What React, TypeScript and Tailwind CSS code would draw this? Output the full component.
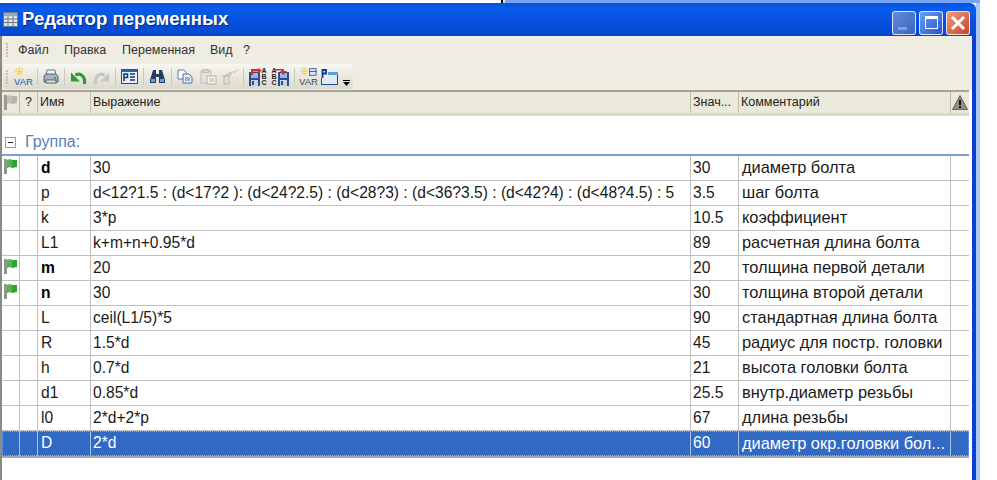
const ROWS = [
  { name: "d", expr: "30", val: "30", note: "диаметр болта", flag: true },
  { name: "p", expr: "d<12?1.5 : (d<17?2 ): (d<24?2.5) : (d<28?3) : (d<36?3.5) : (d<42?4) : (d<48?4.5) : 5", val: "3.5", note: "шаг болта" },
  { name: "k", expr: "3*p", val: "10.5", note: "коэффициент" },
  { name: "L1", expr: "k+m+n+0.95*d", val: "89", note: "расчетная длина болта" },
  { name: "m", expr: "20", val: "20", note: "толщина первой детали", flag: true },
  { name: "n", expr: "30", val: "30", note: "толщина второй детали", flag: true },
  { name: "L", expr: "ceil(L1/5)*5", val: "90", note: "стандартная длина болта" },
  { name: "R", expr: "1.5*d", val: "45", note: "радиус для постр. головки" },
  { name: "h", expr: "0.7*d", val: "21", note: "высота головки болта" },
  { name: "d1", expr: "0.85*d", val: "25.5", note: "внутр.диаметр резьбы" },
  { name: "l0", expr: "2*d+2*p", val: "67", note: "длина резьбы" },
  { name: "D", expr: "2*d", val: "60", note: "диаметр окр.головки бол...", selected: true },
];

const GRID = "grid grid-cols-[18px_18px_53px_600px_48px_212px_18px]";

function Flag({ color = "#2fa52f", pole = "#8a9a8a" }: { color?: string; pole?: string }) {
  return (
    <svg width="13" height="15" viewBox="0 0 13 15">
      <rect x="0" y="0" width="3" height="15" fill={pole} />
      <path d="M3 1L6 0L8 1L13 1L13 8L8 9L6 8L3 9Z" fill={color} />
      <path d="M3 1L6 0L8 1V8L6 8L3 9Z" fill="#fff" fillOpacity="0.18" />
    </svg>
  );
}

function VarIcon({ grid }: { grid?: boolean }) {
  return (
    <div className="flex flex-col items-center leading-none w-[17px]">
      <div className={`flex items-center gap-px h-[10px] w-full ${grid ? "justify-center" : "justify-start"}`}>
        <svg width="9" height="9" viewBox="0 0 9 9">
          <path d="M4.5 0V9M0 4.5H9M1.2 1.2L7.8 7.8M7.8 1.2L1.2 7.8" stroke="#f0cc50" strokeWidth="1.3" strokeDasharray="2 1" />
        </svg>
        {grid && (
          <svg width="8" height="8" viewBox="0 0 8 8">
            <rect x="0.5" y="0.5" width="7" height="7" fill="#dfe8f4" stroke="#3a5f90" />
            <path d="M0 3.5H8" stroke="#3a5f90" />
          </svg>
        )}
      </div>
      <span className={`text-[9.5px] leading-[10px] ${grid ? "text-[#3a4658]" : "text-[#1f55b5]"}`}>VAR</span>
    </div>
  );
}

function Sep() {
  return <div className="w-px h-[17px] mx-[5px] bg-[#c9c8bd]" />;
}

function Printer() {
  return (
    <svg width="16" height="16" viewBox="0 0 16 16">
      <path d="M4 1H12L13 6H3Z" fill="#eef1f5" stroke="#6a7585" />
      <path d="M1 7L3 5H13L15 7V13H1Z" fill="#a9b3c0" stroke="#55606e" />
      <rect x="3" y="11" width="10" height="3" fill="#dfe3e8" stroke="#55606e" />
      <rect x="11" y="8" width="2" height="2" fill="#32b040" />
    </svg>
  );
}

function Arrow({ color, flip }: { color: string; flip?: boolean }) {
  return (
    <svg width="17" height="16" viewBox="0 0 17 16" className={flip ? "-scale-x-100" : ""}>
      <path d="M14.5 15C15.5 8 11 3.5 5.5 6" fill="none" stroke={color} strokeWidth="3.2" />
      <path d="M1 3.5L1 12.5L10 12.5Z" fill={color} />
    </svg>
  );
}

function PeIcon() {
  return (
    <svg width="17" height="15" viewBox="0 0 17 15">
      <rect x="0.5" y="0.5" width="16" height="14" fill="#eaf0f8" stroke="#1f4a8c" />
      <rect x="0.5" y="0.5" width="16" height="2.5" fill="#2a62b0" />
      <path d="M3 12V5H6.5V8.5H3" fill="none" stroke="#16397a" strokeWidth="1.6" />
      <path d="M9 5H14M9 8H14M9 11H14" stroke="#16397a" strokeWidth="1.4" />
    </svg>
  );
}

function Binoculars() {
  return (
    <svg width="17" height="15" viewBox="0 0 17 15">
      <path d="M4 1H7V5H10V1H13L16 11V14H10V8H7V14H1V11Z" fill="#223e66" />
      <rect x="2" y="10" width="4" height="3" fill="#6f9bd0" />
      <rect x="11" y="10" width="4" height="3" fill="#6f9bd0" />
    </svg>
  );
}

function Copy() {
  return (
    <svg width="16" height="15" viewBox="0 0 16 15">
      <path d="M1 1H7L9 3V10H1Z" fill="#fff" stroke="#5a7ea8" />
      <path d="M6 5H12L15 8V14H6Z" fill="#eef3fa" stroke="#4a6f9e" />
      <path d="M8 9H13M8 11H13" stroke="#4a6f9e" />
    </svg>
  );
}

function Paste() {
  return (
    <svg width="17" height="16" viewBox="0 0 17 16">
      <rect x="1" y="2" width="10" height="12" fill="#e6e4da" stroke="#c0beb4" />
      <rect x="3" y="0.5" width="6" height="3" fill="#d8d6cc" stroke="#c0beb4" />
      <rect x="7" y="7" width="9" height="8" fill="#f4f3ec" stroke="#b4b2a8" />
      <path d="M9 10H14M9 12H14" stroke="#b4b2a8" />
    </svg>
  );
}

function Spray() {
  return (
    <svg width="17" height="16" viewBox="0 0 17 16">
      <path d="M4 7L10 3V5L8 8V15H3V8Z" fill="#e2e0d6" stroke="#b8b6ac" />
      <path d="M0.5 7H8" stroke="#b8b6ac" />
      <circle cx="13" cy="3" r="1" fill="#b8b6ac" />
      <circle cx="16" cy="1.5" r="1" fill="#c8c6bc" />
    </svg>
  );
}

function SaveAbc({ reverse }: { reverse?: boolean }) {
  const floppy = (
    <svg width="11" height="14" viewBox="0 0 11 14">
      <rect width="11" height="14" fill="#2b4d92" />
      <rect x="2" y="1" width="7" height="5" fill="#9bb6e6" />
      <rect x="2" y="8" width="7" height="6" fill="#c9d3e6" />
      <rect x="3" y="9" width="2" height="4" fill="#2b4d92" />
    </svg>
  );
  const abc = (
    <div className="flex flex-col text-[7px] leading-[6px] text-[#223] w-[6px] items-center font-semibold">
      <span>A</span>
      <span>B</span>
      <span>C</span>
    </div>
  );
  return (
    <div className="relative flex items-end gap-px h-[18px]">
      {reverse ? abc : floppy}
      {reverse ? floppy : abc}
      <svg width="12" height="7" viewBox="0 0 12 7" className={`absolute top-0 ${reverse ? "left-[4px]" : "left-[1px]"}`}>
        <path d={reverse ? "M0 1H9V3H12L8.5 7L5 3H7V2.5H0Z" : "M1 7V1H8V0L12 2.5L8 5V3.5H3V7Z"} fill="#e02a20" />
      </svg>
    </div>
  );
}

function WindowIcon() {
  return (
    <svg width="17" height="16" viewBox="0 0 17 16">
      <rect x="0.5" y="3.5" width="16" height="12" fill="#dfeaf8" stroke="#1f4a8c" />
      <rect x="1" y="3" width="16" height="3" fill="#5b9fe0" />
      <rect x="0" y="0" width="7" height="9" fill="#eaf0fb" />
      <path d="M1.5 9V1H5V4.5H1.5" fill="none" stroke="#12359a" strokeWidth="1.8" />
    </svg>
  );
}

function Grip() {
  return (
    <div className="flex flex-col gap-px w-[3px]">
      {[0, 1, 2, 3, 4].map((i) => (
        <div key={i} className="w-[2px] h-[2px] bg-[#c5c2b0]" />
      ))}
    </div>
  );
}

function TitleButton({ kind }: { kind: "min" | "max" | "close" }) {
  const bg =
    kind === "close"
      ? "bg-gradient-to-br from-[#ec9b80] to-[#c9401c]"
      : kind === "max"
        ? "bg-gradient-to-br from-[#6f9df0] to-[#2355d0]"
        : "bg-gradient-to-br from-[#5f8bd8] to-[#3a66c0]";
  return (
    <div className={`w-[24px] h-[24px] rounded-[3px] border border-white/80 flex items-center justify-center ${bg}`}>
      {kind === "min" && <div className="w-[9px] h-[3px] bg-[#7fa2d8] mt-[11px] -ml-[4px]" />}
      {kind === "max" && <div className="w-[13px] h-[13px] border border-white border-t-[3px]" />}
      {kind === "close" && (
        <svg width="16" height="16" viewBox="0 0 16 16">
          <path d="M2 2L14 14M14 2L2 14" stroke="#fff" strokeWidth="3" />
        </svg>
      )}
    </div>
  );
}

export default function App() {
  return (
    <div
      className="w-[997px] h-[480px] bg-white overflow-hidden text-[#222]"
      style={{ fontFamily: '"Liberation Sans", Arial, sans-serif' }}
    >
      <div className="w-[980px] h-[480px] flex flex-col bg-[#a9c8f5]">
        {/* Strip above the window */}
        <div className="h-[3px] shrink-0 flex">
          <div className="w-[501px] bg-white" />
          <div className="w-[2px] bg-black" />
          <div className="w-[2px] bg-[#d8e2f5]" />
          <div className="flex-1 bg-[#76a4f5]" />
        </div>
        <div className="flex-1 min-h-0 mr-[4px] flex flex-col bg-white">
          {/* Title bar */}
          <div className="h-[33px] shrink-0 flex items-center justify-between pl-[3px] pr-[6px] rounded-tr-[6px] bg-gradient-to-b from-[#0a4fd8] via-[#0a5cec] via-15% to-[#0347cf]">
            <div className="flex items-center gap-[4px]">
              <svg width="15" height="15" viewBox="0 0 15 15">
                <rect x="0.5" y="0.5" width="14" height="14" fill="#dfe4ea" stroke="#6b7888" />
                <rect x="1" y="1" width="13" height="3" fill="#9aabc0" />
                <path d="M1 7H14M1 10.5H14M5 4V14M10 4V14" stroke="#6b7888" />
              </svg>
              <span className="text-[18.6px] font-bold text-white leading-none [text-shadow:1px_1px_1px_#0a2a80]">
                Редактор переменных
              </span>
            </div>
            <div className="flex gap-[3px] mt-[6px]">
              <TitleButton kind="min" />
              <TitleButton kind="max" />
              <TitleButton kind="close" />
            </div>
          </div>

          <div className="flex-1 min-h-0 flex border-r-[4px] border-[#0a3fd0]">
            <div className="flex-1 min-w-0 flex flex-col border-l-[2px] border-[#8a8a80]">
              {/* Menu */}
              <div className="h-[28px] shrink-0 bg-[#efece1] flex items-center pl-[4px] text-[12.5px] text-[#333]">
                <Grip />
                <span className="ml-[9px] w-[46px]">Файл</span>
                <span className="w-[58px]">Правка</span>
                <span className="w-[88px]">Переменная</span>
                <span className="w-[33px]">Вид</span>
                <span>?</span>
              </div>
              {/* Toolbar */}
              <div className="h-[26px] shrink-0 bg-[#efece1] flex items-start pl-[1px]">
                <div className="h-[25px] flex items-center pl-[3px] pr-[3px] rounded-[3px] bg-gradient-to-b from-[#f7f6f0] to-[#dcdacd]">
                  <Grip />
                  <div className="w-[6px]" />
                  <VarIcon />
                  <Sep />
                  <Printer />
                  <Sep />
                  <Arrow color="#2f9a35" />
                  <div className="w-[6px]" />
                  <Arrow color="#c6c7c4" flip />
                  <Sep />
                  <PeIcon />
                  <Sep />
                  <Binoculars />
                  <Sep />
                  <Copy />
                  <div className="w-[7px]" />
                  <Paste />
                  <div className="w-[4px]" />
                  <Spray />
                  <Sep />
                  <SaveAbc />
                  <div className="w-[4px]" />
                  <SaveAbc reverse />
                  <Sep />
                  <VarIcon grid />
                  <div className="w-[4px]" />
                  <WindowIcon />
                  <div className="w-[7px] ml-[5px] flex flex-col items-center self-end mb-[3px]">
                    <div className="w-[7px] h-px bg-black mb-px" />
                    <svg width="7" height="4" viewBox="0 0 7 4">
                      <path d="M0 0H7L3.5 4Z" fill="#000" />
                    </svg>
                  </div>
                </div>
              </div>
              <div className="flex-1 min-h-0 pr-[3px] flex flex-col">
                {/* Table header */}
                <div className={`${GRID} h-[26px] shrink-0 bg-[#ebe9dc] border-t-[2px] border-[#a5a394] border-b-[3px] border-b-[#dbd8c8] text-[12.5px] text-[#222] items-stretch`}>
                  <div className="flex items-center justify-center border-r border-[#bdbbaa]">
                    <Flag color="#b4b4ac" pole="#9a9a92" />
                  </div>
                  <div className="flex items-center justify-center border-r border-[#bdbbaa]">?</div>
                  <div className="flex items-center pl-[2px] border-r border-[#bdbbaa]">Имя</div>
                  <div className="flex items-center pl-[2px] border-r border-[#bdbbaa]">Выражение</div>
                  <div className="flex items-center pl-[2px] border-r border-[#bdbbaa]">Знач...</div>
                  <div className="flex items-center pl-[2px] border-r border-[#bdbbaa]">Комментарий</div>
                  <div className="flex items-center justify-center">
                    <svg width="16" height="15" viewBox="0 0 16 15">
                      <path d="M8 0.5L15.5 14.5H0.5Z" fill="#8e8e84" stroke="#66665e" />
                      <rect x="7" y="5" width="2" height="5" fill="#111" />
                      <rect x="7" y="11" width="2" height="2" fill="#111" />
                    </svg>
                  </div>
                </div>
                {/* Group */}
                <div className="h-[40px] shrink-0 flex items-end gap-[9px] pl-[3px] pb-[3px] border-b-[2px] border-[#7f9fd4] text-[16px] text-[#5a7fb5]">
                  <div className="w-[11px] h-[11px] mb-[3px] border border-[#7f9fd4] flex items-center justify-center">
                    <div className="w-[5px] h-px bg-[#222]" />
                  </div>
                  <span className="leading-[18px]">Группа:</span>
                </div>
                {/* Rows */}
                <div className="flex flex-col border-b-[2px] border-[#a8a8a8]">
                  {ROWS.map((r) => (
                    <div
                      key={r.name}
                      className={`${GRID} h-[25px] text-[15.6px] ${
                        r.selected ? "bg-[#316ac5] text-white outline-dotted outline-1 outline-[#aaa] -outline-offset-1" : "border-b border-[#c0c0c0] text-[#1a1a1a]"
                      }`}
                    >
                      <div className={`flex items-start justify-center pt-[3px] border-r ${r.selected ? "border-[#a8c0e8]" : "border-[#c0c0c0]"}`}>
                        {r.flag && <Flag />}
                      </div>
                      <div className={`border-r ${r.selected ? "border-[#a8c0e8]" : "border-[#c0c0c0]"}`} />
                      <div className={`flex items-center pl-[3px] pb-[1px] border-r ${r.flag ? "font-bold text-black" : ""} ${r.selected ? "border-[#a8c0e8]" : "border-[#c0c0c0]"}`}>{r.name}</div>
                      <div className={`flex items-center pl-[2px] pb-[1px] border-r whitespace-nowrap overflow-hidden ${r.selected ? "border-[#a8c0e8]" : "border-[#c0c0c0]"}`}>{r.expr}</div>
                      <div className={`flex items-center pl-[2px] pb-[1px] border-r ${r.selected ? "border-[#a8c0e8]" : "border-[#c0c0c0]"}`}>{r.val}</div>
                      <div className={`flex items-center pl-[3px] pb-[1px] border-r whitespace-nowrap overflow-hidden text-[16.4px] ${r.selected ? "border-[#a8c0e8]" : "border-[#c0c0c0]"}`}>{r.note}</div>
                      <div />
                    </div>
                  ))}
                </div>
              </div>
            </div>
          </div>
        </div>
      </div>
    </div>
  );
}
